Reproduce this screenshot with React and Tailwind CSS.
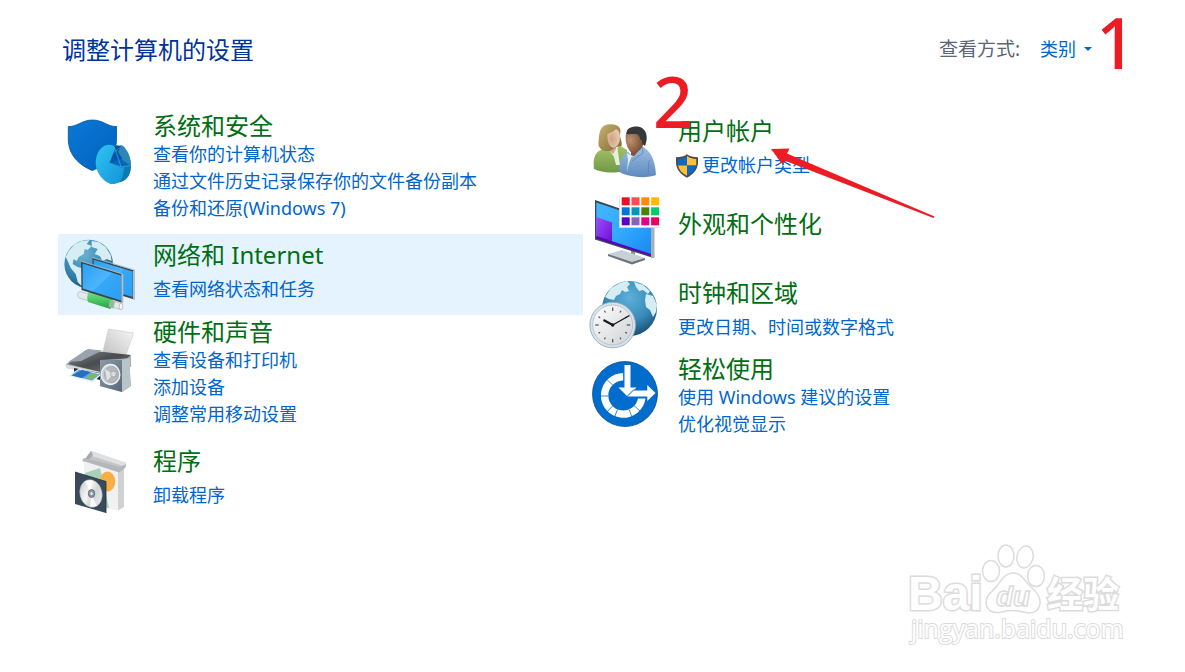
import React, { useState } from "react";

const SecurityIcon = () => (
  <svg className="h-[72px] w-[72px]" viewBox="0 0 72 72" fill="none" aria-hidden="true">
    <defs>
      <linearGradient id="shieldFill" x1="0" y1="0" x2="1" y2="1">
        <stop offset="0" stopColor="#0a78d6" />
        <stop offset="1" stopColor="#0062be" />
      </linearGradient>
      <linearGradient id="discFill" x1="0" y1="0" x2="1" y2="1">
        <stop offset="0" stopColor="#2fc4f2" />
        <stop offset="1" stopColor="#1493d6" />
      </linearGradient>
    </defs>
    <path
      d="M4.300 10.500C13 11 18 4 28.500 4S44 11 52.500 10.500V23C52.500 39 41 50 28.300 54.500C15 49 4.300 39 4.300 23Z"
      fill="url(#shieldFill)"
      stroke="#0b4f91"
      strokeWidth="0.800"
    />
    <path d="M48 28.700C58 28 66 36 67 48C67.500 57 64 64 57 66L46 68Z" fill="#0c7cae" />
    <path
      d="M43 29C49 28 55 32 58 40C61 49 60.500 59 56 65.500C52 69 46 68.500 41 65C35 60 31.500 53 31.700 46C32 38 36 30.500 43 29Z"
      fill="url(#discFill)"
    />
    <path d="M51 30L58.500 29.500C64 34 67 42 66.800 49.500L57 52Z" fill="#2b87b8" />
    <path d="M51.500 32L45.500 47L57 51L58 42Z" fill="#0655a8" />
    <path d="M50 30.500L58 29.500L53 37Z" fill="#084f92" />
    <path d="M45.500 47L57 43L66.500 49.500L57 51.500Z" fill="#0767bd" />
    <path d="M50.500 31L57 51M45.500 47L57 51L66.500 49.500M50.500 36L58.500 29.500" stroke="#4cb9ea" strokeWidth="0.600" />
  </svg>
);

const Continents = () => (
  <g fill="#d5edf3">
    <path d="M-20 -13L-14 -20L-7 -23L1 -24L-2 -20L3 -18L-1 -14L-4 -15L-5 -10L-10 -7L-12 -3L-15 -5L-16 0L-11 3L-7 4L-3 9L-5 15L-7 22L-11 18L-13 10L-18 4L-21 -3L-23 -7Z" />
    <path d="M3 -23L10 -22L17 -17L22 -9L23 -3L18 -5L14 -3L11 -8L6 -10L9 -15L3 -17Z" />
    <path d="M10 -3L18 -2L22 3L19 11L15 14L13 6L9 2Z" />
  </g>
);

const NetworkIcon = () => (
  <svg className="h-[72px] w-[72px]" viewBox="0 0 72 72" fill="none" aria-hidden="true">
    <defs>
      <radialGradient id="netGlobe" cx="0.400" cy="0.300" r="0.750">
        <stop offset="0" stopColor="#6bb3d3" />
        <stop offset="0.600" stopColor="#3585ad" />
        <stop offset="1" stopColor="#1d5678" />
      </radialGradient>
      <linearGradient id="screenFill" x1="0" y1="0" x2="1" y2="1">
        <stop offset="0" stopColor="#28a0f5" />
        <stop offset="0.500" stopColor="#4db5fb" />
        <stop offset="0.520" stopColor="#36a7f8" />
        <stop offset="1" stopColor="#2b9ff5" />
      </linearGradient>
      <linearGradient id="cableGreen" x1="0" y1="0" x2="0" y2="1">
        <stop offset="0" stopColor="#7fe08a" />
        <stop offset="0.500" stopColor="#4cc862" />
        <stop offset="1" stopColor="#269b3e" />
      </linearGradient>
    </defs>
    <circle cx="24.700" cy="26" r="24.300" fill="url(#netGlobe)" />
    <g transform="translate(24.700 26)">
      <Continents />
    </g>
    <path d="M28.500 20L70.500 32.500V61.500L29 49Z" fill="#36464f" />
    <path d="M29.700 21.800L68.700 33.500V59L30 47.500Z" fill="url(#screenFill)" />
    <path d="M69 32L71 33V61L69 61.500Z" fill="#b5bec4" />
    <path d="M28.500 19.500L70.500 32" stroke="#a9b6be" strokeWidth="0.900" />
    <path d="M16 53.500L58 65.500L56.500 71.500L15 60C13 58 13.500 54 16 53.500Z" fill="#e6e9ea" stroke="#a6adb1" strokeWidth="0.600" />
    <path d="M25.500 53L49 60L46.500 71L24 64C22.500 60 23.500 55.500 25.500 53Z" fill="url(#cableGreen)" />
    <path d="M46 62L51 63.500L49.500 70.500L44.500 69Z" fill="#8fbd9a" />
    <ellipse cx="57" cy="68.500" rx="1.800" ry="3.200" fill="#f7f7f7" stroke="#9da3a6" strokeWidth="0.600" />
    <path d="M17 23.500L59 36.500V65L17.500 52Z" fill="#36464f" />
    <path d="M18.500 25.500L57 37.500V62.500L18.800 50.500Z" fill="url(#screenFill)" />
    <path d="M57.300 36L59.300 36.600V64.500L57.300 65Z" fill="#b5bec4" />
    <path d="M16.500 23L59 36" stroke="#a9b6be" strokeWidth="0.900" />
  </svg>
);

const HardwareIcon = () => (
  <svg className="h-[72px] w-[72px]" viewBox="0 0 72 72" fill="none" aria-hidden="true">
    <defs>
      <linearGradient id="paperFill" x1="0" y1="1" x2="1" y2="0">
        <stop offset="0" stopColor="#bfbfc0" />
        <stop offset="1" stopColor="#f7f7f7" />
      </linearGradient>
      <linearGradient id="printerTop" x1="0" y1="0" x2="1" y2="1">
        <stop offset="0" stopColor="#8c9196" />
        <stop offset="0.500" stopColor="#4a4c4f" />
        <stop offset="1" stopColor="#77797b" />
      </linearGradient>
      <linearGradient id="speakerFace" x1="0" y1="0" x2="1" y2="1">
        <stop offset="0" stopColor="#8b99a7" />
        <stop offset="1" stopColor="#596879" />
      </linearGradient>
    </defs>
    <path d="M44.500 5L69.500 9L61.500 32L38.500 29Z" fill="url(#paperFill)" stroke="#c9c9c9" strokeWidth="0.600" />
    <path d="M2 40L24 26L67 32V43L38 51L3 44Z" fill="#a8afb4" />
    <path d="M22 26L67 31L60 37L36 48L4 40Z" fill="url(#printerTop)" />
    <path d="M24 25L38 26.500L17 37L4 38Z" fill="#98a3ad" />
    <path d="M1.500 40.500L36 48V51.500L2 44Z" fill="#d8dcdf" />
    <path d="M10 44L36 49V56L10 49Z" fill="#24282b" />
    <path d="M15 44.500L38 50L29 58.500L4 52Z" fill="#e9f1f6" />
    <path d="M15 45.500L36 50.500L28 56.500L7 51.500Z" fill="#5aa7dd" />
    <path d="M18 46L27 48L18 54L8 51.500Z" fill="#276fbd" />
    <path d="M27 49L34 51L28 56L22 54Z" fill="#7eb66d" />
    <path d="M36 36L56 35L65 34L67 62L58 68L36 62Z" fill="#a7b2bb" />
    <path d="M36 36H58V68L36 62Z" fill="url(#speakerFace)" />
    <path d="M58 36L66 34V63L58 68Z" fill="#b9c3ca" />
    <ellipse cx="46.500" cy="50.500" rx="9.300" ry="10" fill="#c8ccd0" stroke="#edf0f2" strokeWidth="1.400" />
    <ellipse cx="47.500" cy="50.500" rx="7" ry="8" fill="#b4b9be" stroke="#8d959c" strokeWidth="0.500" />
    <path d="M41 45L49 50L43 57Z" fill="#e1e3e5" />
    <circle cx="49.500" cy="50" r="3" fill="#d9dcdf" stroke="#858b90" strokeWidth="0.600" />
  </svg>
);

const ProgramsIcon = () => (
  <svg className="h-[72px] w-[72px]" viewBox="0 0 72 72" fill="none" aria-hidden="true">
    <defs>
      <linearGradient id="discShine" x1="0" y1="0" x2="1" y2="1">
        <stop offset="0" stopColor="#bfc3c6" />
        <stop offset="0.400" stopColor="#f4f4f4" />
        <stop offset="0.600" stopColor="#d2d5d7" />
        <stop offset="1" stopColor="#f0f0f0" />
      </linearGradient>
    </defs>
    <path d="M20 16L27 5L62 17L59 25Z" fill="#c3c5c7" />
    <path d="M27 5L62 16.500V21L28 10Z" fill="#dfe0e1" />
    <path d="M27 5L19 15.500L22 17L29 9Z" fill="#a7aaad" />
    <path d="M20 14.500L54 26V64.500L20 58Z" fill="#f1f1f2" />
    <path d="M54 26L60 23V61L54 64.500Z" fill="#d0d1d3" />
    <path d="M36 22L21 27V58L45 62Z" fill="#a7d0b9" />
    <ellipse cx="43.500" cy="35.500" rx="7.800" ry="10" fill="#f9ad45" />
    <path d="M18 14.500L55 26.500L61.500 21.500L62 18L56 21L20 12Z" fill="#b4b7ba" />
    <path d="M11 26L42 35.500V67L11 58Z" fill="#394b5a" />
    <path d="M11 26L42 35.500V67" stroke="#23303a" strokeWidth="0.800" />
    <ellipse cx="27" cy="47.500" rx="11" ry="14" transform="rotate(-14 27 47.500)" fill="url(#discShine)" stroke="#aeb3b7" strokeWidth="0.500" />
    <path d="M27 47.500L21 35L28 34ZM27 47.500L33 60L26 61Z" fill="#fff" opacity="0.800" />
    <ellipse cx="27.500" cy="47.500" rx="3.200" ry="4" fill="#8a98a3" stroke="#596a78" strokeWidth="0.900" />
    <ellipse cx="27.500" cy="47.500" rx="1.200" ry="1.600" fill="#e9ecee" />
  </svg>
);

const UsersIcon = () => (
  <svg className="h-[72px] w-[72px]" viewBox="0 0 72 72" fill="none" aria-hidden="true">
    <defs>
      <linearGradient id="hairFill" x1="0" y1="0" x2="1" y2="1">
        <stop offset="0" stopColor="#c7b36f" />
        <stop offset="1" stopColor="#806936" />
      </linearGradient>
      <linearGradient id="greenShirt" x1="0" y1="0" x2="0" y2="1">
        <stop offset="0" stopColor="#a7c46b" />
        <stop offset="1" stopColor="#6f9946" />
      </linearGradient>
      <linearGradient id="blueShirt" x1="0" y1="0" x2="0" y2="1">
        <stop offset="0" stopColor="#9ec0e2" />
        <stop offset="1" stopColor="#5d8abf" />
      </linearGradient>
      <radialGradient id="skinLight" cx="0.350" cy="0.550" r="0.700">
        <stop offset="0" stopColor="#cfa183" />
        <stop offset="1" stopColor="#ecd0b8" />
      </radialGradient>
      <radialGradient id="skinDark" cx="0.250" cy="0.400" r="0.750">
        <stop offset="0" stopColor="#bd9272" />
        <stop offset="1" stopColor="#74482a" />
      </radialGradient>
    </defs>
    <path d="M5 54C4 46 5 39 10 36L17 32L24 40L30 30L38 35V55C26 59 13 58 5 54Z" fill="url(#greenShirt)" />
    <path d="M20 33L28 30L29 37L31 50L27 50L25 42Z" fill="#e6eee0" />
    <path d="M18 28H27V34L24 39L18 34Z" fill="#d3a888" />
    <path d="M9.500 30C10 16 11 9.500 22 9.300C31 9.500 32.500 14 31 20C31 23 33.500 27 32.500 31L27 32L22 35.500C17 37 11 36 9.500 30Z" fill="url(#hairFill)" />
    <path d="M18.500 19C22 17.500 25 16 27 14C31 16 31.500 21 30.500 26C29.500 30 27 32.500 24 32.800C20 31.500 18 26 18.500 19Z" fill="url(#skinLight)" />
    <path d="M42 32L53 27V36L48 43L42 40Z" fill="#81502d" />
    <path d="M30.500 57C30 46 33 40 39 36.500L44 42L53.500 31.500C61 36 66 43 67 60C57 64 39 62 30.500 57Z" fill="url(#blueShirt)" />
    <path d="M38 38L43 41L40 48L38 57L39 45Z" fill="#dfebf5" />
    <path d="M53.500 32L54 38L43 46M60 45L59 60" stroke="#587fad" strokeWidth="0.700" />
    <path d="M37 18C42 16 52 15 55 22C56 31 51 37 43.500 38.500C38.500 35 35.500 27 37 18Z" fill="url(#skinDark)" />
    <path d="M37.500 19C37 13 43 11 49 11.500C57 13 60 21 56 31L53.500 29L53 25C51 26 51 21 49 19.500C45 18.500 41 19.500 37.500 19Z" fill="#35383b" />
  </svg>
);

const SWATCHES = [
  ["#e81224", "#ff4b4b", "#ff8c00", "#ffb900"],
  ["#0078d7", "#0099bc", "#498205", "#00cc6a"],
  ["#5b00c7", "#8764b8", "#e3008c", "#ea005e"],
];

const AppearanceIcon = () => (
  <svg className="h-[72px] w-[72px]" viewBox="0 0 72 72" fill="none" aria-hidden="true">
    <defs>
      <linearGradient id="displayFill" x1="0" y1="0" x2="1" y2="1">
        <stop offset="0" stopColor="#45b5ff" />
        <stop offset="0.500" stopColor="#32aaff" />
        <stop offset="1" stopColor="#1787f2" />
      </linearGradient>
      <linearGradient id="purpleFill" x1="0" y1="0" x2="1" y2="1">
        <stop offset="0" stopColor="#a04cff" />
        <stop offset="1" stopColor="#6811d1" />
      </linearGradient>
    </defs>
    <path d="M42 52L46 54V61L42 60Z" fill="#8d969c" />
    <path d="M19 59L33 55L56 63L43 68Z" fill="#c9d0d5" />
    <path d="M19 59L43 67L56 63V65L43 69.500L19 61Z" fill="#69747c" />
    <path d="M6 5L64.500 25V63L6 44.500Z" fill="#3d4750" />
    <path d="M62 24L65.500 26V62.500L62 63.500Z" fill="#a8b0b5" />
    <path d="M7.300 7.500L62 26V60.500L7.300 42.500Z" fill="url(#displayFill)" />
    <path d="M7.300 22L23 27.500V47.500L7.300 42.500Z" fill="url(#purpleFill)" />
    <path d="M7.300 41L62 59V61L7.300 43.500Z" fill="#5900b8" />
    <rect x="30.500" y="1" width="42" height="31.500" fill="#fff" />
    <path d="M30.500 1V32.500H72" stroke="#dadada" strokeWidth="0.700" />
    {SWATCHES.map((row, r) =>
      row.map((color, c) => (
        <rect key={color} x={32.7 + c * 9.8} y={2.3 + r * 10} width="8" height="8" fill={color} />
      ))
    )}
  </svg>
);

const ClockIcon = () => (
  <svg className="h-[72px] w-[72px]" viewBox="0 0 72 72" fill="none" aria-hidden="true">
    <defs>
      <radialGradient id="clockGlobe" cx="0.500" cy="0.300" r="0.700">
        <stop offset="0" stopColor="#5cb0da" />
        <stop offset="0.600" stopColor="#388ab8" />
        <stop offset="1" stopColor="#1b4f72" />
      </radialGradient>
      <linearGradient id="clockFace" x1="0" y1="0" x2="1" y2="1">
        <stop offset="0" stopColor="#fff" />
        <stop offset="1" stopColor="#cfd1d4" />
      </linearGradient>
    </defs>
    <circle cx="40.500" cy="29.500" r="27.500" fill="url(#clockGlobe)" />
    <g fill="#d5edf3">
      <path d="M16 18L22 9L31 4L38 2L41 5L38 8L40 12L36 13L33 11L31 15L27 17L25 21L20 20Z" />
      <path d="M45 3L54 6L61 12L59 15L54 11L50 12L47 8Z" />
      <path d="M57 15L64 17L68 26L67 33L64 38L61 31L57 28L56 21Z" />
    </g>
    <circle cx="23.700" cy="46" r="22.800" fill="#d8e4ed" stroke="#93a9b8" strokeWidth="0.900" />
    <circle cx="23.700" cy="46" r="20" fill="url(#clockFace)" stroke="#a9b5be" strokeWidth="0.700" />
    <g stroke="#4a4f54" strokeWidth="1.200">
      {[0, 30, 60, 90, 120, 150, 180, 210, 240, 270, 300, 330].map((deg) => (
        <path key={deg} d={deg % 90 ? "M23.700 29.500V31.500" : "M23.700 28.500V32"} transform={`rotate(${deg} 23.7 46)`} />
      ))}
    </g>
    <path d="M23.700 46L40.500 36.500" stroke="#16191c" strokeWidth="1.400" />
    <path d="M23.700 46L14.500 41" stroke="#16191c" strokeWidth="2" />
    <circle cx="23.700" cy="46" r="1.700" fill="#16191c" />
  </svg>
);

const EaseIcon = () => (
  <svg className="h-[72px] w-[72px]" viewBox="0 0 72 72" fill="none" aria-hidden="true">
    <circle cx="36" cy="36" r="32.500" fill="#006ccc" stroke="#0c4f8c" strokeWidth="0.800" />
    <path d="M34.500 15V22.500A15 15 0 1 0 49 40.500H56.500A22.400 22.400 0 1 1 34.500 15Z" fill="#fff" />
    <path
      d="M17.500 21L23.500 27M11 38H19M18 54L23.500 48M25.500 59L28.500 51.500M43 59L40 51.500M51 53L45 47.500"
      stroke="#006ccc"
      strokeWidth="0.800"
    />
    <path
      d="M35.500 7H41.500V29.500H47.500L38.500 38.500L29.500 29.500H35.500Z"
      fill="#fff"
      stroke="#006ccc"
      strokeWidth="2.400"
      paintOrder="stroke"
    />
    <path
      d="M38.500 38.500L44.500 32.500H58.300V27L66.500 35L58.300 43V38.500Z"
      fill="#fff"
      stroke="#006ccc"
      strokeWidth="1.400"
      paintOrder="stroke"
    />
  </svg>
);

const UacShield = () => (
  <svg className="-ml-[2px] h-6 w-[22px] shrink-0" viewBox="0 0 22 24" aria-hidden="true">
    <path d="M11 0.300C8 2.500 5 3.300 0 3.300V9C0.500 16 5 20.500 11 23.700C17 20.500 21.500 16 22 9V3.300C17 3.300 14 2.500 11 0.300Z" fill="#4b4b4b" />
    <path d="M11 2C8.500 4 6 4.700 1.800 4.900V11.500H11Z" fill="#0d68c8" />
    <path d="M11 2C13.500 4 16 4.700 20.200 4.900V11.500H11Z" fill="#ffc038" />
    <path d="M2.100 11.500H11V21.800C6 19.500 3 16 2.100 11.500Z" fill="#ffc038" />
    <path d="M19.900 11.500H11V21.800C16 19.500 19 16 19.900 11.500Z" fill="#0d68c8" />
  </svg>
);

const leftItems = [
  {
    title: "系统和安全",
    icon: SecurityIcon,
    links: ["查看你的计算机状态", "通过文件历史记录保存你的文件备份副本", "备份和还原(Windows 7)"],
    iconPad: "pt-[11px]",
    textPad: "pt-[6px] pb-3",
  },
  {
    title: "网络和 Internet",
    icon: NetworkIcon,
    links: ["查看网络状态和任务"],
    active: true,
    iconPad: "pt-1",
    textPad: "pt-[6px] pb-3",
  },
  {
    title: "硬件和声音",
    icon: HardwareIcon,
    links: ["查看设备和打印机", "添加设备", "调整常用移动设置"],
    iconPad: "pt-[9px]",
    textPad: "pt-[2px] pb-3",
  },
  {
    title: "程序",
    icon: ProgramsIcon,
    links: ["卸载程序"],
    iconPad: "pt-[6px]",
    textPad: "pt-[6px] pb-3",
  },
];

const rightItems = [
  {
    title: "用户帐户",
    icon: UsersIcon,
    links: ["更改帐户类型"],
    shield: true,
    iconPad: "pt-[10px]",
    textPad: "pt-[11px] pb-[14px]",
  },
  {
    title: "外观和个性化",
    icon: AppearanceIcon,
    links: [],
    iconPad: "pt-[2px] pb-[5px]",
    textPad: "pt-4",
  },
  {
    title: "时钟和区域",
    icon: ClockIcon,
    links: ["更改日期、时间或数字格式"],
    iconPad: "pt-[7px]",
    textPad: "pt-[6px]",
  },
  {
    title: "轻松使用",
    icon: EaseIcon,
    links: ["使用 Windows 建议的设置", "优化视觉显示"],
    iconPad: "pt-[7px]",
    textPad: "pt-[3px]",
  },
];

const CategoryItem = ({ item, children }) => {
  const Icon = item.icon;
  return (
    <section className={`relative flex gap-[17px] pl-[6px] ${item.active ? "bg-[#e5f3ff]" : ""}`}>
      <div className={`shrink-0 ${item.iconPad}`}>
        <Icon />
      </div>
      <div className={`min-w-0 ${item.textPad}`}>
        <h2 className="text-2xl leading-[30px]">
          <a href="#" className="text-[#006e12] hover:underline">
            {item.title}
          </a>
        </h2>
        <ul className={item.links.length === 1 ? "mt-[6px]" : ""}>
          {item.links.map((link) => (
            <li key={link} className="text-lg leading-[27px] text-[#0066cc]">
              <a href="#" className="inline-flex items-center gap-1 align-top hover:underline">
                {item.shield && <UacShield />}
                {link}
              </a>
            </li>
          ))}
        </ul>
      </div>
      {children}
    </section>
  );
};

const Watermark = () => (
  <div className="pointer-events-none absolute right-[60px] bottom-[22px]">
    <svg className="h-[108px] w-[220px]" viewBox="0 0 220 108" aria-label="Baidu 经验">
      <g fill="#fff" stroke="#dcdcdc" strokeWidth="1.500">
        <g fontFamily="'Liberation Sans', 'Noto Sans CJK SC', sans-serif" fontWeight="700" strokeWidth="3" paintOrder="stroke">
          <text x="3" y="68" fontSize="48">
            Bai
          </text>
          <text x="142" y="66" fontSize="36">
            经验
          </text>
        </g>
        <ellipse cx="86" cy="29" rx="8.500" ry="10.500" />
        <ellipse cx="101" cy="14" rx="8" ry="11" />
        <ellipse cx="120" cy="15" rx="8" ry="11" transform="rotate(12 120 15)" />
        <ellipse cx="131" cy="34" rx="8.500" ry="10.500" />
        <path d="M107 31C116 30 119 38 126 45C132 50 136 55 135 62C133 71 126 72 119 70C111 68 104 68 97 70C88 72 82 69 81 61C81 53 87 50 91 45C96 39 99 32 107 31Z" />
        <text x="91" y="64" fontSize="28" fontFamily="'Liberation Sans', sans-serif" fontStyle="italic" fontWeight="700">
          du
        </text>
        <text x="6" y="96" fontSize="25" fontFamily="'Open Sans', sans-serif" strokeWidth="2" paintOrder="stroke">
          jingyan.baidu.com
        </text>
      </g>
    </svg>
  </div>
);

const App = () => {
  const [view, setView] = useState("类别");

  return (
    <div className="relative min-h-screen bg-white font-['Noto_Sans','Noto_Sans_CJK_SC',sans-serif]">
      <header className="flex items-start justify-between pt-[34px] pr-[93px] pl-[62px]">
        <h1 className="text-2xl leading-8 text-[#003399]">调整计算机的设置</h1>
        <div className="relative flex items-center gap-5 leading-[30px]">
          <label htmlFor="view-by" className="text-[19px] text-[#5a6673]">
            查看方式:
          </label>
          <div className="flex items-center gap-2">
            <select
              id="view-by"
              value={view}
              onChange={(e) => setView(e.target.value)}
              className="w-9 cursor-pointer appearance-none bg-transparent text-lg leading-[30px] text-[#0066cc] outline-none"
            >
              <option>类别</option>
            </select>
            <svg className="h-1 w-2" viewBox="0 0 8 4" aria-hidden="true">
              <path d="M0 0H8L4 4Z" fill="#0066cc" />
            </svg>
          </div>
          <span className="absolute top-[-27px] left-full ml-1 text-[70px] leading-[70px] font-medium text-[#ed1c24]">
            1
          </span>
        </div>
      </header>

      <main className="grid grid-cols-2 items-start pt-[39px] pr-[77px] pl-[58px]">
        <div>
          {leftItems.map((item) => (
            <CategoryItem key={item.title} item={item} />
          ))}
        </div>
        <div>
          {rightItems.map((item) => (
            <CategoryItem key={item.title} item={item}>
              {item.shield && (
                <>
                  <span className="pointer-events-none absolute top-[-39px] left-[70px] text-[70px] leading-[70px] font-medium text-[#ed1c24]">
                    2
                  </span>
                  <svg
                    className="pointer-events-none absolute top-[43px] left-[188px] h-[72px] w-[164px]"
                    viewBox="0 0 164 72"
                    aria-hidden="true"
                  >
                    <path d="M0 1L18.500 0.500L16 5.500L163.500 68.500L162.500 70L13.500 12.500L12 17Z" fill="#ed1c24" />
                  </svg>
                </>
              )}
            </CategoryItem>
          ))}
        </div>
      </main>

      <Watermark />
    </div>
  );
};

export default App;
